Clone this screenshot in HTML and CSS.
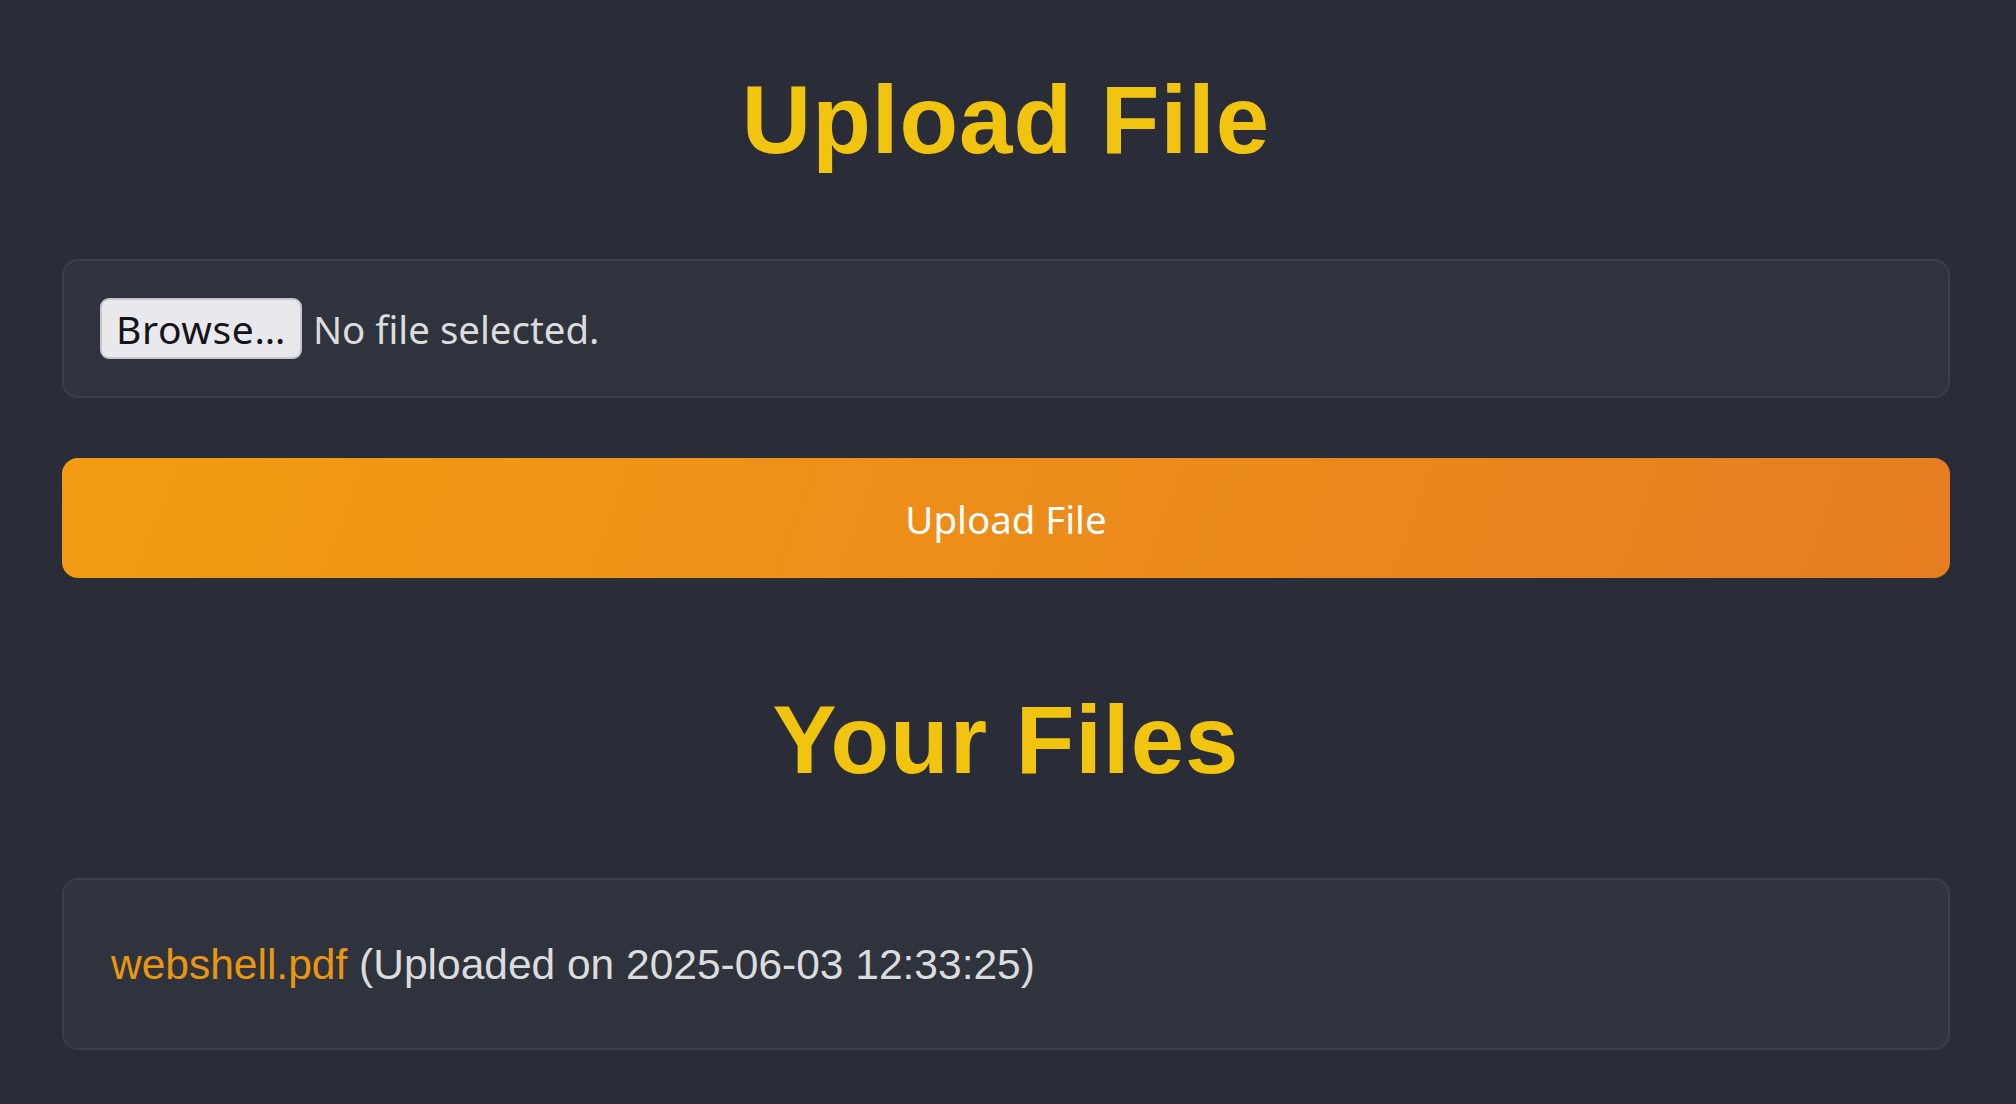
FILE: index.html
```html
<!DOCTYPE html>
<html lang="en">
<head>
<meta charset="utf-8">
<title>Upload File</title>
<link rel="stylesheet" href="styles.css">
</head>
<body>
<main class="container">
  <h1 class="title">Upload File</h1>
  <form class="upload-form">
    <div class="file-box">
      <label class="file-picker">
        <span class="browse-btn">Browse…</span>
        <span class="file-status">No file selected.</span>
      </label>
    </div>
    <button type="button" class="upload-btn">Upload File</button>
  </form>
  <h2 class="title title-files">Your Files</h2>
  <ul class="file-list">
    <li class="file-item"><a class="file-link" href="#">webshell.pdf</a> (Uploaded on 2025-06-03 12:33:25)</li>
  </ul>
</main>
</body>
</html>
```
FILE: styles.css
```css
html, body {
  margin: 0;
  padding: 0;
  background: #2a2d38;
}

body {
  font-family: "Liberation Sans", Arial, sans-serif;
  color: #dcdcdc;
}

.container {
  padding: 65px 66px 40px 62px;
}

.title {
  margin: 0 0 84px;
  font-family: "Liberation Sans", Arial, sans-serif;
  font-weight: bold;
  font-size: 96px;
  line-height: 110px;
  letter-spacing: 1px;
  color: #f1c40f;
  text-align: center;
}

.title-files {
  margin-top: 107px;
  margin-bottom: 83px;
}

.upload-form {
  display: flex;
  flex-direction: column;
  gap: 60px;
}

.file-box {
  background: #2f333e;
  border: 2px solid #3c3f48;
  border-radius: 16px;
  padding: 37px 36px;
}

.file-picker {
  display: flex;
  align-items: center;
  font-family: "Noto Sans", sans-serif;
  font-size: 38.4px;
}

.browse-btn {
  display: inline-flex;
  align-items: center;
  box-sizing: border-box;
  height: 61px;
  padding: 0 14px;
  background: #e9e9ed;
  border: 2px solid #c6c6cc;
  border-radius: 9px;
  color: #15141a;
  font-size: 39px;
  letter-spacing: 0.6px;
  line-height: 1;
}

.file-status {
  margin-left: 11px;
  color: #dcdcdc;
}

.upload-btn {
  display: block;
  width: 100%;
  height: 120px;
  border: none;
  border-radius: 16px;
  background: linear-gradient(110deg, #f39c12 0%, #e67e22 100%);
  color: #ffffff;
  font-family: "Noto Sans", sans-serif;
  font-size: 38.4px;
  padding-top: 3px;
  cursor: pointer;
}

.file-list {
  list-style: none;
  margin: 0;
  padding: 0;
}

.file-item {
  background: #2f333e;
  border: 2px solid #3c3f48;
  border-radius: 16px;
  padding: 60px 47px 59px;
  font-size: 42.5px;
  line-height: 49px;
  color: #dcdcdc;
}

.file-link {
  color: #eb960f;
  text-decoration: none;
}
```
